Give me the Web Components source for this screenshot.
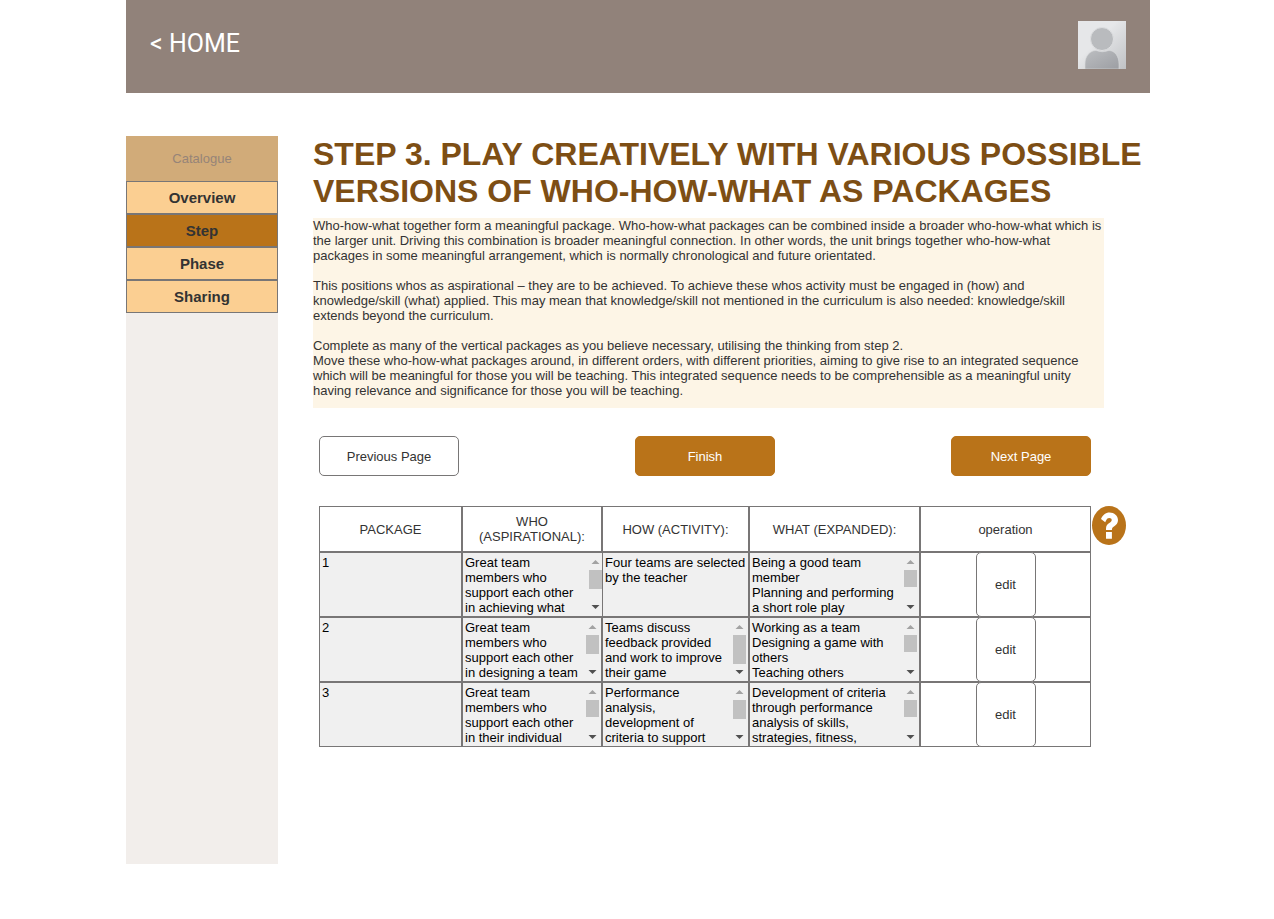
<!DOCTYPE html>
<html lang="en">
<head>
<meta charset="utf-8">
<meta name="viewport" content="width=device-width, initial-scale=1">
<title>Step 3</title>
<style>
  body { margin: 0; padding-left: 2px; background: #fff; color: #333; font: 13px/15px "Liberation Sans", Arial, sans-serif;
    --accent: #b97319; --line: #787676; }
</style>
</head>
<body>
<catalogue-page></catalogue-page>
<script>
const define = (name, html, setup) => {
  const template = document.createElement('template');
  template.innerHTML = html;
  customElements.define(name, class extends HTMLElement {
    constructor() {
      super();
      this.attachShadow({ mode: 'open' }).append(template.content.cloneNode(true));
    }
    connectedCallback() { if (setup) setup(this, this.shadowRoot); }
  });
};

define('top-bar', `
<style>
  :host { display: flex; justify-content: space-between; align-items: center; height: 93px; padding: 0 24px; box-sizing: border-box; background: #91827a; }
  a { color: #fff; text-decoration: none; font: 25px/32px Roboto, sans-serif; padding-bottom: 5px; }
  svg { display: block; width: 48px; height: 48px; margin-bottom: 3px; }
</style>
<a href="#home">&lt; HOME</a>
<svg viewBox="0 0 48 48" role="img" aria-label="Profile">
  <defs>
    <linearGradient id="back" x1="0" y1="0" x2="1" y2="1"><stop offset=".4" stop-color="#e6e7e9"/><stop offset="1" stop-color="#c0c2c5"/></linearGradient>
    <linearGradient id="body" x1="0" y1="0" x2="1" y2="1"><stop offset="0" stop-color="#bcbec1"/><stop offset="1" stop-color="#9c9ea3"/></linearGradient>
  </defs>
  <rect width="48" height="48" fill="url(#back)"/>
  <path d="M7 48V43C7 35 12 29.500 18 29.500Q24 32 31 29.500C36.500 29.500 41 35 41 43V48Z" fill="url(#body)" stroke="#d9dadc" stroke-width=".6"/>
  <circle cx="24" cy="18" r="11.500" fill="#b9bbbe" stroke="#dedfe1"/>
</svg>`);

define('side-nav', `
<style>
  :host { display: block; background: #f2eeeb; min-height: 728px; }
  nav { display: flex; flex-direction: column; text-align: center; }
  ::slotted(a) { box-sizing: border-box; border: 1px solid var(--line); padding: 8px 0; background: #fbcf92; color: #333; font-weight: bold; font-size: 15px; text-decoration: none; }
  ::slotted(a[aria-current]) { background: var(--accent); }
  ::slotted(a.heading) { border: 0; padding: 15px 0; background: #d1ab79; color: #968478; font-weight: normal; font-size: 13px; }
</style>
<nav><slot></slot></nav>`);

define('action-button', `
<style>
  :host { display: inline-block; }
  button { box-sizing: border-box; display: block; width: 140px; height: 40px; padding: 0; border: 1px solid var(--line); border-radius: 5px; background: #fff; color: #333; font: inherit; }
  :host([primary]) button { border-color: var(--accent); background: var(--accent); color: #fff; }
  :host([small]) button { width: 60px; height: 65px; }
</style>
<button type="button"><slot></slot></button>`);

define('text-cell', `
<style>
  :host { display: flex; height: 63px; background: #f0f0f0; }
  :host([wide]) { margin-right: -1px; overflow: hidden; }
  :host([wide]) .rail { margin-right: -2px; }
  textarea { flex: 1; min-width: 0; box-sizing: border-box; border: 0; margin: 0; padding: 2px; background: none; color: #000; font: inherit; resize: none; overflow: hidden; white-space: pre; }
  .rail { display: none; flex: none; width: 17px; flex-direction: column; align-items: center; }
  :host([thumb]) .rail { display: flex; }
  svg { flex: none; width: 17px; height: 17px; fill: #a3a3a3; }
  .thumb { width: 13px; background: #c1c1c1; }
  .down { margin-top: auto; fill: #505050; }
</style>
<textarea readonly></textarea>
<div class="rail">
  <svg viewBox="0 0 17 17"><path d="M4.500 11L8.500 7L12.500 11Z"/></svg>
  <div class="thumb"></div>
  <svg class="down" viewBox="0 0 17 17"><path d="M4.500 6L12.500 6L8.500 10Z"/></svg>
</div>`, (host, root) => {
  const area = root.querySelector('textarea');
  area.value = host.getAttribute('value');
  area.setAttribute('aria-label', host.getAttribute('label'));
  root.querySelector('.thumb').style.height = (host.getAttribute('thumb') || 0) + 'px';
});

const rows = [
  [['1'], ['Great team\nmembers who\nsupport each other\nin achieving what', 19, true], ['Four teams are selected\nby the teacher'], ['Being a good team\nmember\nPlanning and performing\na short role play', 17]],
  [['2'], ['Great team\nmembers who\nsupport each other\nin designing a team', 19], ['Teams discuss\nfeedback provided\nand work to improve\ntheir game', 29], ['Working as a team\nDesigning a game with\nothers\nTeaching others', 17]],
  [['3'], ['Great team\nmembers who\nsupport each other\nin their individual', 17], ['Performance\nanalysis,\ndevelopment of\ncriteria to support', 19], ['Development of criteria\nthrough performance\nanalysis of skills,\nstrategies, fitness,', 17]],
];
const labels = ['Package', 'Who', 'How', 'What'];

define('package-table', `
<style>
  :host { display: block; }
  table { width: 100%; table-layout: fixed; border-spacing: 0; }
  th, td { border: 1px solid var(--line); padding: 0; }
  th { height: 44px; font-weight: normal; }
  td { height: 63px; }
  .op { text-align: center; }
  action-button { display: block; width: 60px; margin: -1px auto; }
</style>
<table>
  <colgroup><col style="width:143px"><col style="width:140px"><col style="width:147px"><col style="width:171px"><col></colgroup>
  <thead><tr><th>PACKAGE</th><th>WHO<br>(ASPIRATIONAL):</th><th>HOW (ACTIVITY):</th><th>WHAT (EXPANDED):</th><th>operation</th></tr></thead>
  <tbody>${rows.map(row => `<tr>${row.map(([text, thumb, wide], i) =>
    `<td><text-cell label="${labels[i]}" value="${text}"${thumb ? ` thumb="${thumb}"` : ''}${wide ? ' wide' : ''}></text-cell></td>`).join('')}<td class="op"><action-button small>edit</action-button></td></tr>`).join('')}</tbody>
</table>`);

define('help-button', `
<style>
  :host { display: block; width: 34px; }
  button { display: block; border: 0; padding: 0; background: none; }
  svg { display: block; width: 34px; height: 39px; }
</style>
<button type="button" aria-label="Help"><svg viewBox="0 0 34 39">
  <ellipse cx="17" cy="19.500" rx="17" ry="19.500" fill="#b97319"/>
  <path d="M9 13C10.800 8.800 13.500 6.400 17.600 6.400C22.200 6.400 26 9.600 26 14C26 17 24.500 18.800 22.300 20.300C20.600 21.500 19.900 22 19.900 24H14V22.800C14 19.700 15.200 18.300 17.300 16.900C19 15.700 19.700 15.200 19.700 13.900C19.700 12.700 18.700 12 17.300 12C15.500 12 14.700 12.900 13.200 16.200ZM14 26H19.900V32.800H14Z" fill="#fff"/>
</svg></button>`);

define('catalogue-page', `
<style>
  :host { display: block; max-width: 1024px; margin: 0 auto; }
  .layout { display: grid; grid-template-columns: 152px minmax(0, 1fr); column-gap: 35px; margin-top: 43px; }
  h1 { margin: 0; font-size: 32px; line-height: 37px; color: #7d4e14; }
  .intro { margin: 8px 46px 0 0; padding-bottom: 10px; background: #fdf5e6; }
  p { margin: 0 0 15px; }
  p:last-child { margin: 0; }
  .actions { display: flex; justify-content: space-between; margin: 28px 59px 0 6px; }
  .work { display: flex; gap: 1px; margin: 30px 24px 0 6px; }
  package-table { flex: 1; min-width: 0; }
</style>
<top-bar></top-bar>
<div class="layout">
  <side-nav>
    <a class="heading" href="#catalogue">Catalogue</a>
    <a href="#overview">Overview</a>
    <a href="#step" aria-current="page">Step</a>
    <a href="#phase">Phase</a>
    <a href="#sharing">Sharing</a>
  </side-nav>
  <main>
    <h1>STEP 3. PLAY CREATIVELY WITH VARIOUS POSSIBLE VERSIONS OF WHO-HOW-WHAT AS PACKAGES</h1>
    <div class="intro">
      <p>Who-how-what together form a meaningful package. Who-how-what packages can be combined inside a broader who-how-what which is the larger unit. Driving this combination is broader meaningful connection. In other words, the unit brings together who-how-what packages in some meaningful arrangement, which is normally chronological and future orientated.</p>
      <p>This positions whos as aspirational – they are to be achieved. To achieve these whos activity must be engaged in (how) and knowledge/skill (what) applied. This may mean that knowledge/skill not mentioned in the curriculum is also needed: knowledge/skill extends beyond the curriculum.</p>
      <p>Complete as many of the vertical packages as you believe necessary, utilising the thinking from step 2.<br>Move these who-how-what packages around, in different orders, with different priorities, aiming to give rise to an integrated sequence which will be meaningful for those you will be teaching. This integrated sequence needs to be comprehensible as a meaningful unity having relevance and significance for those you will be teaching.</p>
    </div>
    <div class="actions">
      <action-button>Previous Page</action-button>
      <action-button primary>Finish</action-button>
      <action-button primary>Next Page</action-button>
    </div>
    <div class="work"><package-table></package-table><help-button></help-button></div>
  </main>
</div>`);
</script>
</body>
</html>
